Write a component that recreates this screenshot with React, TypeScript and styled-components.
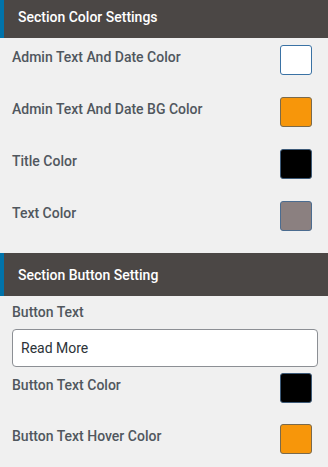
import React from "react";
import styled, {createGlobalStyle} from "styled-components";

const GlobalStyle = createGlobalStyle`
  body {
    margin: 0;
    background-color: #f0f0f0;
    font-family: Roboto, "Liberation Sans", sans-serif;
  }
`

const Page = styled.div`
  width: 328px;
  margin-top: -5px;
  background-color: #f0f0f0;
`

const Header = styled.div`
  height: 43px;
  display: flex;
  align-items: center;
  padding-left: 14px;
  background-color: #4b4745;
  border-left: 4px solid #0073aa;
  box-sizing: border-box;
  color: #ffffff;
  font-size: 14px;
  font-weight: 500;
`

const Body = styled.div<{ $top: number; $bottom: number }>`
  display: flex;
  flex-direction: column;
  padding: ${p => p.$top}px 16px ${p => p.$bottom}px 12px;
`

const Row = styled.div<{ $gap: number }>`
  display: flex;
  align-items: center;
  justify-content: space-between;
  height: 30px;
  margin-bottom: ${p => p.$gap}px;
`

const Label = styled.span`
  font-size: 14px;
  font-weight: 500;
  color: #50575e;
  margin-bottom: 6px;
`

const Swatch = styled.div<{ $color: string; $border: string }>`
  width: 32px;
  height: 30px;
  box-sizing: border-box;
  border-radius: 3px;
  background-color: ${p => p.$color};
  border: 1.5px solid ${p => p.$border};
`

const FieldLabel = styled.div`
  font-size: 14px;
  font-weight: 500;
  color: #50575e;
  height: 20px;
  line-height: 20px;
  margin-bottom: 7px;
`

const TextInput = styled.input`
  width: calc(100% + 6px);
  height: 38px;
  box-sizing: border-box;
  border: 1px solid #8c8f94;
  border-radius: 4px;
  padding: 0 8px;
  background-color: #ffffff;
  font-family: Roboto, "Liberation Sans", sans-serif;
  font-size: 14px;
  color: #2c3338;
  margin-bottom: 6px;

  &:focus {
    outline: none;
  }
`

const colorRows = [
    {label: "Admin Text And Date Color", color: "#ffffff", border: "#3a72a4"},
    {label: "Admin Text And Date BG Color", color: "#f7960a", border: "#7a6a4c"},
    {label: "Title Color", color: "#000000", border: "#3d5a78"},
    {label: "Text Color", color: "#8b8080", border: "#4b6c90"},
]

const buttonRows = [
    {label: "Button Text Color", color: "#000000", border: "#3d5a78"},
    {label: "Button Text Hover Color", color: "#f7960a", border: "#7a6a4c"},
]

const App: React.FC = () => {
    return (
        <Page>
            <GlobalStyle/>
            <Header>Section Color Settings</Header>
            <Body $top={7} $bottom={0}>
                {colorRows.map(r => (
                    <Row key={r.label} $gap={22}>
                        <Label>{r.label}</Label>
                        <Swatch $color={r.color} $border={r.border}/>
                    </Row>
                ))}
            </Body>
            <Header>Section Button Setting</Header>
            <Body $top={6} $bottom={14}>
                <FieldLabel>Button Text</FieldLabel>
                <TextInput type="text" defaultValue="Read More"/>
                {buttonRows.map(r => (
                    <Row key={r.label} $gap={21}>
                        <Label>{r.label}</Label>
                        <Swatch $color={r.color} $border={r.border}/>
                    </Row>
                ))}
            </Body>
        </Page>
    )
}

export default App
